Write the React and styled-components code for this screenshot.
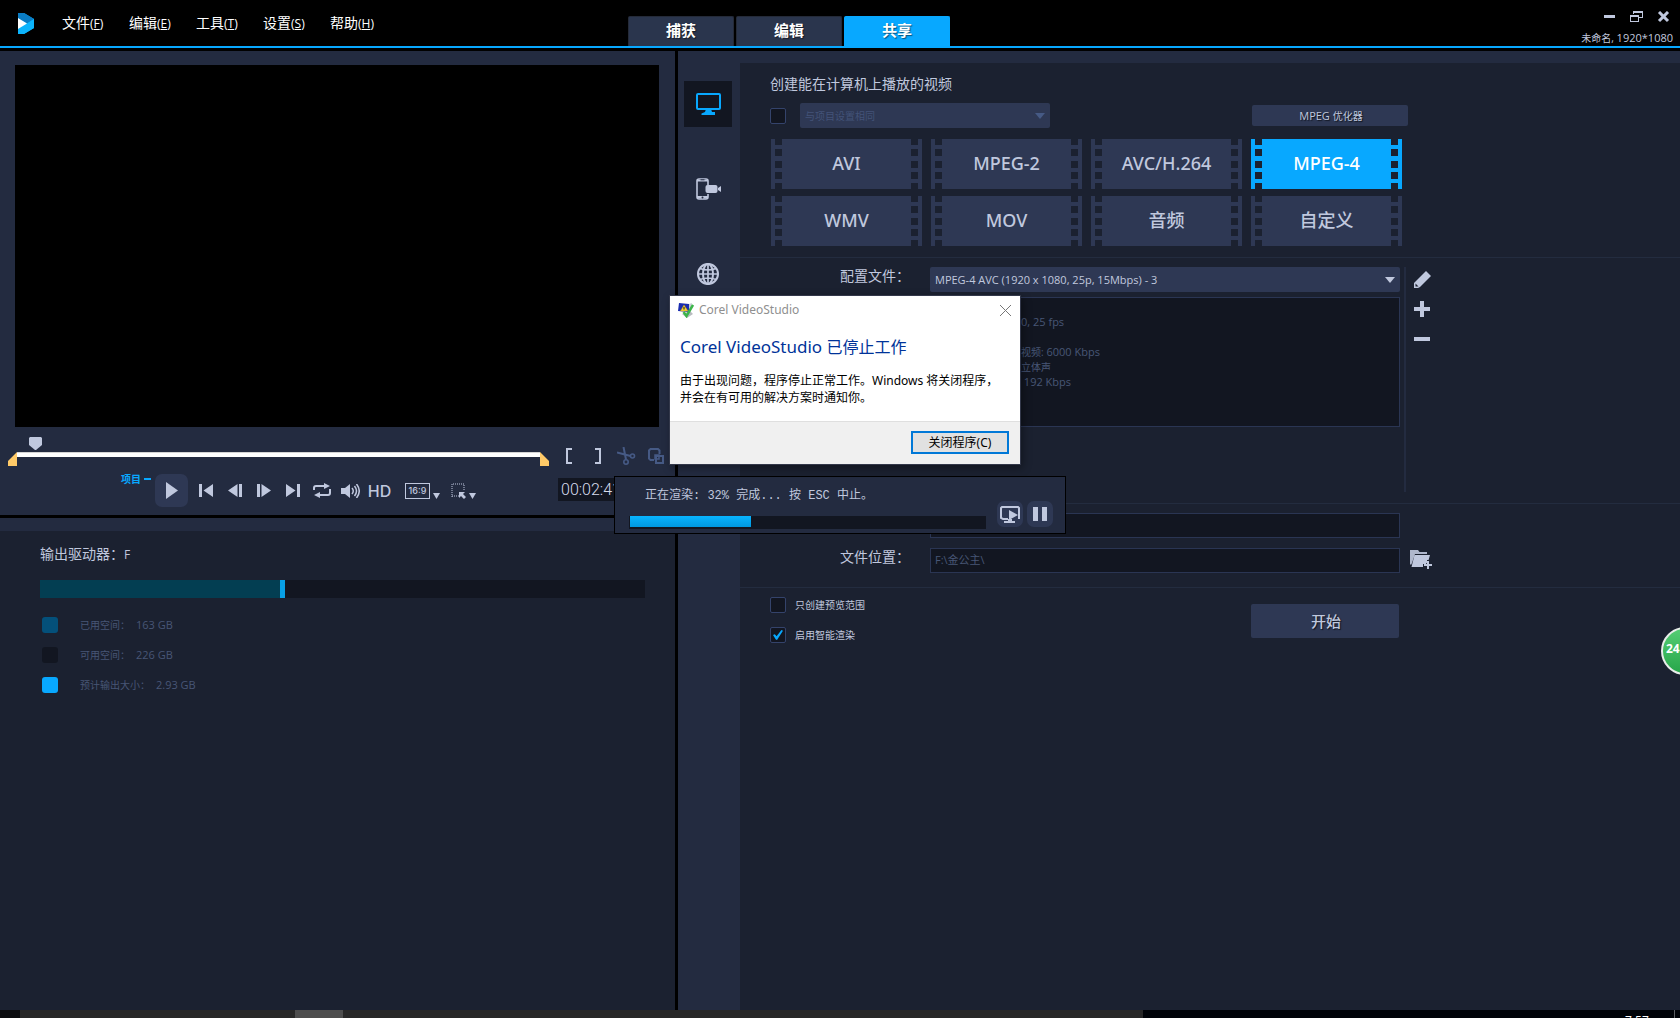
import React, { useState } from "react";
import styled, { createGlobalStyle } from "styled-components";

const ui = '"Open Sans", "Noto Sans", "Noto Sans CJK SC", sans-serif';

const GlobalStyle = createGlobalStyle`
  * {
    box-sizing: border-box;
  }

  body {
    margin: 0;
    background: #000;
    color: #c0c8de;
    font: 11px/16px ${ui};
    overflow: hidden;
  }

  button,
  input,
  select {
    margin: 0;
    color: inherit;
    font: inherit;
  }

  svg {
    display: block;
  }
`;

const Page = styled.div`
  position: relative;
  display: flex;
  flex-direction: column;
  height: 100vh;
  overflow: hidden;
`;

/* ---------- header ---------- */

const Header = styled.header`
  display: flex;
  justify-content: space-between;
  height: 48px;
  border-bottom: 2px solid #08a8ff;
`;

const HeaderLeft = styled.div`
  display: flex;
  flex: 0 1 628px;
  align-items: center;
  padding-left: 18px;
`;

const Menu = styled.nav`
  display: flex;
  margin-left: 28px;
`;

const MenuItem = styled.button`
  width: 67px;
  padding: 0;
  border: 0;
  background: none;
  color: #fff;
  font-size: 14px;
  line-height: 20px;
  text-align: left;
  white-space: nowrap;

  span {
    font-size: 12px;
  }
`;

const Tabs = styled.div`
  display: flex;
  gap: 2px;
  align-items: flex-end;
`;

const Tab = styled.button`
  width: 106px;
  height: 30px;
  padding: 0 0 4px;
  border: 1px solid ${(p) => (p.$active ? "#08a8ff" : "#242a38")};
  border-bottom: 0;
  border-radius: 2px 2px 0 0;
  background: ${(p) => (p.$active ? "#08a8ff" : "#2a354d")};
  color: #fff;
  font-size: 15px;
  font-weight: 700;
  text-shadow: 1px 1px 1px rgba(0, 0, 0, 0.5);
`;

const HeaderRight = styled.div`
  display: flex;
  flex: 1;
  flex-direction: column;
  align-items: flex-end;
  padding: 11px 7px 0 0;
`;

const WindowButtons = styled.div`
  display: flex;
  gap: 14px;
  padding-right: 3px;
`;

const PlainButton = styled.button`
  display: grid;
  place-items: center;
  padding: 0;
  border: 0;
  background: none;
`;

const ProjectName = styled.div`
  margin-top: 7px;
  color: #c0c8de;

  span {
    font-size: 10px;
  }
`;

/* ---------- main split ---------- */

const Main = styled.main`
  display: grid;
  flex: 1;
  grid-template-columns: 675fr 1002fr;
  gap: 3px;
  min-height: 0;
  margin-top: 3px;
`;

const LeftColumn = styled.div`
  display: flex;
  flex-direction: column;
  gap: 3px;
  min-width: 0;
`;

const Player = styled.section`
  height: 464px;
  padding-top: 14px;
  background: #232b40;
`;

const Screen = styled.div`
  margin: 0 16px 0 15px;
  height: 362px;
  background: #000;
`;

const TrimRow = styled.div`
  display: flex;
  gap: 5px;
  padding: 10px 5px 0 8px;
`;

const Scrubber = styled.div`
  display: flex;
  flex: 1;
  flex-direction: column;
  gap: 2px;

  > svg {
    margin-left: 21px;
  }
`;

const Track = styled.div`
  display: flex;
`;

const TrackLine = styled.div`
  flex: 1;
  height: 5px;
  border-top: 1px solid #d4d4d4;
  background: #fff;
`;

const TrimTools = styled.div`
  display: flex;
  padding-top: 9px;
`;

const ToolButton = styled(PlainButton)`
  width: 29px;
  height: 20px;
`;

const Controls = styled.div`
  display: flex;
  align-items: center;
  padding: 8px 11px 0 121px;
`;

const ModeLabel = styled.div`
  display: flex;
  gap: 3px;
  align-items: center;
  align-self: flex-start;
  height: 10px;
  color: #08a8ff;
  font-size: 10px;
  font-weight: 700;

  &::after {
    width: 7px;
    height: 2px;
    background: #08a8ff;
    content: "";
  }
`;

const PlayButton = styled(PlainButton)`
  width: 33px;
  height: 33px;
  margin: 0 3px 0 4px;
  border-radius: 7px;
  background: #2e3854;
`;

const HdButton = styled(ToolButton)`
  font-family: Inter, sans-serif;
  font-size: 16px;
  font-weight: 500;
`;

const DropButton = styled.button`
  display: flex;
  gap: 3px;
  align-items: flex-end;
  margin-left: 11px;
  padding: 0;
  border: 0;
  background: none;
`;

const Ratio = styled.span`
  width: 25px;
  height: 16px;
  border: 1px solid #c0c8de;
  font: 500 9px/13px Inter, sans-serif;
  text-align: center;
`;

const TimeCode = styled.output`
  width: 106px;
  height: 23px;
  margin: -3px 0 0 auto;
  padding-left: 3px;
  background: #121621;
  color: #d7dcec;
  font: 300 16px/23px Roboto, sans-serif;
`;

/* ---------- output drive ---------- */

const Drive = styled.section`
  flex: 1;
  padding: 13px 30px 0 40px;
  border-top: 13px solid #232b40;
  background: #1b2130;
`;

const Title = styled.h2`
  margin: 0;
  color: #c0c8de;
  font-size: 14px;
  font-weight: 400;
  line-height: 20px;

  span {
    font-size: 12px;
  }
`;

const DriveBar = styled.div`
  display: flex;
  height: 18px;
  margin-top: 15px;
  background: #121621;
`;

const Used = styled.div`
  border-right: 5px solid #08a0e6;
  background: #033e52;
`;

const Legend = styled.ul`
  display: grid;
  gap: 14px;
  margin: 19px 0 0;
  padding: 0 0 0 2px;
  list-style: none;
`;

const LegendItem = styled.li`
  display: flex;
  align-items: center;
  color: #485676;
  font-size: 11px;

  &::before {
    width: 16px;
    height: 16px;
    margin-right: 22px;
    border-radius: 3px;
    background: ${(p) => p.$color};
    content: "";
  }

  span {
    margin-right: 6px;
    font-size: 10px;
  }
`;

/* ---------- share panel ---------- */

const RightColumn = styled.div`
  display: flex;
  min-width: 0;
  padding-top: 12px;
  background: #232b40;
`;

const SideBar = styled.nav`
  display: flex;
  flex: 0 0 62px;
  flex-direction: column;
  gap: 39px;
  padding: 18px 8px 0 6px;
`;

const SideButton = styled.button`
  display: grid;
  place-items: center;
  height: 46px;
  padding: 0;
  border: 0;
  background: ${(p) => (p.$active ? "#121621" : "none")};
  color: ${(p) => (p.$active ? "#08a8ff" : "#c0c8de")};
`;

const Share = styled.section`
  flex: 1;
  min-width: 0;
  background: #1b2130;
`;

const Block = styled.div`
  padding: ${(p) => p.$pad};
  border-bottom: ${(p) => (p.$last ? "0" : "1px solid #232c3f")};
`;

const SameRow = styled.div`
  display: flex;
  gap: 14px;
  align-items: center;
  width: 638px;
  margin-top: 9px;
`;

const Check = styled.input.attrs({ type: "checkbox" })`
  display: grid;
  place-items: center;
  width: 16px;
  height: 16px;
  border: 1px solid #34436b;
  border-radius: 2px;
  background: #121621;
  appearance: none;

  &:checked::before {
    width: 10px;
    height: 10px;
    background: #08a8ff;
    clip-path: polygon(0 50%, 18% 42%, 36% 62%, 84% 0, 100% 8%, 40% 100%, 28% 96%);
    content: "";
  }
`;

const SelectBox = styled.div`
  position: relative;
  width: ${(p) => p.$width};

  select {
    width: 100%;
    height: 25px;
    padding: 0 5px;
    border: 0;
    border-radius: 2px;
    background: #2e3854;
    color: ${(p) => (p.$dim ? "#435378" : "#c0c8de")};
    font-size: ${(p) => (p.$dim ? "10px" : "11px")};
    opacity: 1;
    appearance: none;
  }

  svg {
    position: absolute;
    top: 10px;
    right: 5px;
    color: ${(p) => (p.$dim ? "#465a85" : "#c0c8de")};
    pointer-events: none;
  }
`;

const Optimizer = styled.button`
  width: 156px;
  height: 21px;
  margin-left: auto;
  padding: 0 0 0 2px;
  border: 0;
  border-radius: 2px;
  background: #2e3854;
  text-shadow: 1px 1px 1px #10141f;

  span {
    font-size: 10px;
  }
`;

const Formats = styled.div`
  display: grid;
  grid-template-columns: repeat(4, 151px);
  gap: 7px 9px;
  margin: 11px 0 0 1px;
`;

const Film = styled.button`
  display: flex;
  align-items: center;
  justify-content: space-between;
  height: 50px;
  padding: 0 4px;
  border: 0;
  background: ${(p) => (p.$active ? "#08a8ff" : "#2e3854")};
  color: ${(p) => (p.$active ? "#fff" : "#c0c8de")};
  font-family: "Noto Sans", "Noto Sans CJK SC", sans-serif;
  font-size: 18px;
  font-weight: 500;

  span {
    padding-bottom: 2px;
  }

  &::before,
  &::after {
    width: 7px;
    height: 50px;
    background: linear-gradient(
      #1b2130 6px,
      transparent 6px 10px,
      #1b2130 10px 17px,
      transparent 17px 22px,
      #1b2130 22px 29px,
      transparent 29px 33px,
      #1b2130 33px 40px,
      transparent 40px 44px,
      #1b2130 44px
    );
    content: "";
  }
`;

const ProfileRow = styled.div`
  display: grid;
  grid-template-columns: 90px 470px 1fr;
  align-items: start;
`;

const FieldLabel = styled.label`
  color: #c0c8de;
  font-size: 14px;
  line-height: 18px;
  white-space: nowrap;
`;

const Info = styled.dl`
  display: grid;
  grid-template-columns: 84px 1fr;
  gap: 0 1px;
  height: 130px;
  margin: 5px 0 0;
  padding: 16px 5px 0;
  border: 1px solid #2a3553;
  background: #121621;
  align-content: start;
  color: #485676;
  line-height: 15px;

  dt {
    overflow: hidden;
    text-align: right;
    white-space: nowrap;
  }

  dd {
    height: 15px;
    margin: 0;
  }

  small {
    font-size: 10px;
  }
`;

const ProfileTools = styled.div`
  display: flex;
  flex-direction: column;
  gap: 12px;
  height: 225px;
  margin-left: 4px;
  padding: 4px 0 0 8px;
  border-left: 2px solid #232b40;
  align-items: flex-start;
`;

const TextInput = styled.input`
  width: 100%;
  height: 25px;
  padding: 0 4px 4px;
  border: 1px solid #2a3553;
  background: #121621;
  color: #485676;
  font-size: 11px;
`;

const FileRow = styled(ProfileRow)`
  & + & {
    margin-top: 10px;
  }

  > button {
    margin: 2px 0 0 10px;
    justify-self: start;
  }
`;

const StartRow = styled.div`
  display: flex;
  justify-content: space-between;
  width: 629px;
`;

const CheckList = styled.div`
  display: grid;
  gap: 14px;
`;

const CheckLabel = styled.label`
  display: flex;
  gap: 9px;
  align-items: center;
  height: 16px;
  font-size: 10px;
`;

const StartButton = styled.button`
  width: 148px;
  height: 34px;
  margin-top: 7px;
  padding: 0 0 0 2px;
  border: 0;
  border-radius: 2px;
  background: #2e3854;
  font-size: 15px;
  font-weight: 500;
  text-shadow: 1px 1px 1px #10141f;
`;

/* ---------- windows over the page ---------- */

const CrashDialog = styled.div`
  position: absolute;
  z-index: 2;
  top: 295px;
  left: 669px;
  width: 352px;
  border: 1px solid #33384a;
  background: #fff;
  box-shadow: 2px 3px 8px rgba(0, 0, 0, 0.35);
  color: #000;
  font-family: "Noto Sans", "Noto Sans CJK SC", sans-serif;
  font-size: 12px;
`;

const CrashBar = styled.div`
  display: flex;
  gap: 5px;
  align-items: center;
  height: 28px;
  padding: 0 9px 0 8px;
  color: #8f8f8f;
  font-size: 12px;

  button {
    margin-left: auto;
  }
`;

const CrashBody = styled.div`
  padding: 11px 10px 15px;

  h1 {
    margin: 0;
    color: #003399;
    font-size: 17px;
    font-weight: 400;
    line-height: 24px;
  }

  h1 span {
    font-size: 16px;
  }

  p {
    margin: 13px 0 0;
    line-height: 17px;
  }
`;

const CrashFoot = styled.div`
  display: flex;
  justify-content: flex-end;
  padding: 9px 11px 10px;
  border-top: 1px solid #dfdfdf;
  background: #f0f0f0;

  button {
    width: 98px;
    height: 23px;
    padding: 0;
    border: 2px solid #0078d7;
    background: #e1e1e1;
    line-height: 18px;
  }
`;

const RenderDialog = styled.div`
  position: absolute;
  z-index: 1;
  top: 476px;
  left: 614px;
  display: flex;
  gap: 4px;
  align-items: flex-end;
  width: 452px;
  height: 58px;
  padding: 0 12px 6px 14px;
  border: 1px solid #000;
  background: #232b40;
`;

const RenderStatus = styled.div`
  flex: 1;
  align-self: stretch;
  margin-right: 7px;

  p {
    margin: 0 0 0 16px;
    padding: 10px 0;
    font: 12px/19px "Liberation Mono", "Noto Sans CJK SC", monospace;
  }
`;

const RenderTrack = styled.div`
  height: 13px;
  padding: 0 1px 1px;
  background: #121621;
`;

const RenderFill = styled.div`
  height: 11px;
  background: linear-gradient(#08b4ff, #0098e0);
`;

const RoundButton = styled(PlainButton)`
  width: 26px;
  height: 26px;
  border-radius: 7px;
  background: #2e3854;
`;

const Bubble = styled.div`
  position: absolute;
  top: 627px;
  right: -29px;
  width: 48px;
  height: 48px;
  padding-left: 3px;
  border: 2px solid #e8ece9;
  border-radius: 50%;
  background: linear-gradient(#55cd74, #27a64a);
  color: #fff;
  font: 700 12px/40px "Open Sans", sans-serif;
`;

const TaskBar = styled.footer`
  display: grid;
  grid-template-columns: 20fr 275fr 48fr 800fr 482fr 50fr 5px;
  height: 8px;
  overflow: hidden;
  background: #000308;
`;

const TaskPart = styled.div`
  height: 8px;
  background: ${(p) => p.$color};
`;

const Clock = styled.time`
  padding-top: 3px;
  border-right: 1px solid #5c5f63;
  color: #fff;
  font-size: 12px;
`;

/* ---------- icons ---------- */

const Logo = () => (
  <svg width="16" height="21" viewBox="0 0 16 21">
    <path d="M0 0h6l10 6v9l-10 6H0z" fill="#00a8f0" />
    <path d="M0 0h6l10 6-7 4.500-9-5z" fill="#0a7cc4" />
    <path d="M16 6v9L6 21H0v-5.500l9-5z" fill="#0cb4fc" />
    <path d="M0 5l9 5.500L0 16z" fill="#fff" />
  </svg>
);

const Arrow = ({ size = 10 }) => (
  <svg width={size} height="6" viewBox="0 0 10 6" preserveAspectRatio="none">
    <path d="M0 0h10L5 6z" fill="currentColor" />
  </svg>
);

const Icon = ({ w, h, children }) => (
  <svg width={w} height={h} viewBox={`0 0 ${w} ${h}`} fill="currentColor">
    {children}
  </svg>
);

const stroke = { fill: "none", stroke: "currentColor" };

const MonitorIcon = () => (
  <Icon w={25} h={22}>
    <rect x="1" y="1" width="23" height="15" rx="1" {...stroke} strokeWidth="2" />
    <path d="M10 16h5l1 3h3v3H5.500v-1.500L9 19z" />
  </Icon>
);

const PhoneIcon = () => (
  <Icon w={25} h={22}>
    <path
      d="M12 7V3a2 2 0 0 0-2-2H3a2 2 0 0 0-2 2v16a2 2 0 0 0 2 2h7a2 2 0 0 0 2-2v-3"
      {...stroke}
      strokeWidth="1.600"
    />
    <path d="M1 2h11v1.500H1zM1 18h11v2.500H1z" />
    <path d="M4.500 1.800h4" stroke="#232b40" />
    <circle cx="6.500" cy="19.500" r="1" fill="#232b40" />
    <rect x="9.500" y="7" width="12" height="8" rx="2" />
    <path d="M22 10l3-2v6l-3-2z" />
  </Icon>
);

const GlobeIcon = () => (
  <Icon w={22} h={22}>
    <g {...stroke} strokeWidth="2">
      <circle cx="11" cy="11" r="10" />
      <ellipse cx="11" cy="11" rx="5" ry="10" />
      <path d="M11 1v20M1 11h20M3 5.500q8 3 16 0M3 16.500q8-3 16 0" strokeWidth="1.700" />
    </g>
  </Icon>
);

const PencilIcon = () => (
  <Icon w={17} h={17}>
    <path d="M12 0l5 5L6 16l-2 1H0v-5z" />
    <path d="M1.500 12.500v3h3z" fill="#1b2130" />
  </Icon>
);

const FolderIcon = () => (
  <Icon w={23} h={20}>
    <path d="M0 0h8l1.500 2H17v2H5L2 13l-1 2L0 14z" opacity="0.900" />
    <path d="M4.500 5H20l-2 7-2 1.500V17H1.500z" />
    <path d="M17 10h3v4h4v3h-4v3h-3v-3h-4v-3h4z" fill="#1b2130" />
    <path d="M17 11h2v3h3v2h-3v3h-2v-3h-3v-2h3z" />
  </Icon>
);

const ScissorsIcon = () => (
  <Icon w={19} h={18}>
    <g {...stroke} stroke="#465a85" strokeWidth="2">
      <circle cx="15.500" cy="9" r="2" strokeWidth="1.600" />
      <circle cx="9" cy="15" r="2.200" strokeWidth="1.600" />
      <path d="M0 5.500l13.500 3.500M6.500 0l2.500 12.500" />
    </g>
  </Icon>
);

const OverlapIcon = () => (
  <Icon w={16} h={16}>
    <g {...stroke} stroke="#465a85" strokeWidth="2">
      <path d="M6 12H2.500L1 10.500v-8L2.500 1H10l1.500 1.500V6" />
      <rect x="8" y="8" width="7" height="7" />
      <path d="M11 7H7v4h4z" strokeWidth="1.500" />
    </g>
  </Icon>
);

const CrashIcon = () => (
  <svg width="16" height="16" viewBox="0 0 16 16">
    <path d="M4 12l8-3 3 3-6 4z" fill="#b9bcc0" />
    <path d="M1 1l10 1v8L0 9z" fill="#1a2db0" />
    <path d="M11 2l3-1-1 8-2 1z" fill="#c9ced6" />
    <path d="M6 3l4 6H2.500z" fill="#f7d43a" stroke="#c79b10" strokeWidth="0.500" />
    <path d="M6 5v2.500" stroke="#111" />
    <path d="M5.500 10L8.500 14 15 3" fill="none" stroke="#3cb54a" strokeWidth="2.500" />
  </svg>
);

/* ---------- data ---------- */

const menus = [
  ["文件", "F"],
  ["编辑", "E"],
  ["工具", "T"],
  ["设置", "S"],
  ["帮助", "H"],
];

const formats = ["AVI", "MPEG-2", "AVC/H.264", "MPEG-4", "WMV", "MOV", "音频", "自定义"];

const transport = [
  ["起始", "M0 0h3v13H0zM14 0v13L4.500 6.500z"],
  ["上一帧", "M11 0h3v13h-3zM9.500 0v13L0 6.500z"],
  ["下一帧", "M0 0h3v13H0zM4.500 0v13L14 6.500z"],
  ["结束", "M11 0h3v13h-3zM0 0v13l9.500-6.500z"],
];

const drive = [
  ["已用空间：", "163 GB", "#04507a"],
  ["可用空间：", "226 GB", "#121621"],
  ["预计输出大小：", "2.93 GB", "#08a8ff"],
];

function TopBar() {
  return (
    <Header>
      <HeaderLeft>
        <Logo />
        <Menu>
          {menus.map(([name, key]) => (
            <MenuItem key={key}>
              {name}
              <span>
                (<u>{key}</u>)
              </span>
            </MenuItem>
          ))}
        </Menu>
      </HeaderLeft>
      <Tabs>
        <Tab>捕获</Tab>
        <Tab>编辑</Tab>
        <Tab $active>共享</Tab>
      </Tabs>
      <HeaderRight>
        <WindowButtons>
          <PlainButton aria-label="最小化">
            <Icon w={13} h={12}>
              <path d="M1 4h11v3H1z" />
            </Icon>
          </PlainButton>
          <PlainButton aria-label="还原">
            <Icon w={13} h={12}>
              <path d="M3 0h10v7H9V6h3V2H4v1H3z" />
              <path d="M0 4h9v7H0zm1 2v4h7V6z" fillRule="evenodd" />
            </Icon>
          </PlainButton>
          <PlainButton aria-label="关闭">
            <Icon w={13} h={12}>
              <path d="M2 1l9 9M11 1l-9 9" {...stroke} strokeWidth="3" />
            </Icon>
          </PlainButton>
        </WindowButtons>
        <ProjectName>
          <span>未命名,</span> 1920*1080
        </ProjectName>
      </HeaderRight>
    </Header>
  );
}

function PlayerPanel() {
  return (
    <Player>
      <Screen />
      <TrimRow>
        <Scrubber>
          <Icon w={13} h={13}>
            <path d="M1 0h11l1 1v7l-6 5h-1L0 8V1z" />
          </Icon>
          <Track>
            <svg width="9" height="14">
              <path d="M9 0v14H0V9z" fill="#ffca68" />
            </svg>
            <TrackLine />
            <svg width="9" height="14">
              <path d="M0 0l9 9v5H0z" fill="#ffca68" />
            </svg>
          </Track>
        </Scrubber>
        <TrimTools>
          <ToolButton aria-label="开始标记">
            <Icon w={6} h={16}>
              <path d="M0 0h6v2H2v12h4v2H0z" />
            </Icon>
          </ToolButton>
          <ToolButton aria-label="结束标记">
            <Icon w={6} h={16}>
              <path d="M0 0h6v16H0v-2h4V2H0z" />
            </Icon>
          </ToolButton>
          <ToolButton aria-label="剪切">
            <ScissorsIcon />
          </ToolButton>
          <ToolButton aria-label="复制">
            <OverlapIcon />
          </ToolButton>
        </TrimTools>
      </TrimRow>
      <Controls>
        <ModeLabel>项目</ModeLabel>
        <PlayButton aria-label="播放">
          <Icon w={12} h={17}>
            <path d="M0 0l12 8.500L0 17z" />
          </Icon>
        </PlayButton>
        {transport.map(([name, path]) => (
          <ToolButton key={name} aria-label={name}>
            <Icon w={14} h={13}>
              <path d={path} />
            </Icon>
          </ToolButton>
        ))}
        <ToolButton aria-label="重复">
          <Icon w={18} h={15}>
            <path d="M1 7V5q0-2 2-2h9M17 6v4q0 2-2 2H6" {...stroke} strokeWidth="2" />
            <path d="M11 0l6 3-6 3zM7 9v6l-6-3z" />
          </Icon>
        </ToolButton>
        <ToolButton aria-label="音量">
          <Icon w={19} h={14}>
            <path d="M0 4h4l5-4v14l-5-4H0z" />
            <path d="M11 4q2.500 3 0 6M13.500 2q4 5 0 10M15.500 0q5.500 7 0 14" {...stroke} strokeWidth="1.500" />
          </Icon>
        </ToolButton>
        <HdButton>HD</HdButton>
        <DropButton aria-label="更改项目宽高比">
          <Ratio>16:9</Ratio>
          <Arrow size={7} />
        </DropButton>
        <DropButton aria-label="选择区域">
          <Icon w={15} h={16}>
            <path d="M1 14V1h12v6M1 13h7" {...stroke} strokeDasharray="1 1" />
            <path d="M8 9h6l-2 2 3 3-2 2-3-3-2 2z" />
          </Icon>
          <Arrow size={7} />
        </DropButton>
        <TimeCode>00:02:41:05</TimeCode>
      </Controls>
    </Player>
  );
}

function DrivePanel() {
  return (
    <Drive>
      <Title>
        输出驱动器：<span>F</span>
      </Title>
      <DriveBar>
        <Used style={{ width: `${(245 / 605) * 100}%` }} />
      </DriveBar>
      <Legend>
        {drive.map(([name, value, color]) => (
          <LegendItem key={name} $color={color}>
            <span>{name}</span>
            {value}
          </LegendItem>
        ))}
      </Legend>
    </Drive>
  );
}

function SharePanel() {
  const [format, setFormat] = useState("MPEG-4");

  return (
    <RightColumn>
      <SideBar>
        <SideButton $active aria-label="计算机">
          <MonitorIcon />
        </SideButton>
        <SideButton aria-label="设备">
          <PhoneIcon />
        </SideButton>
        <SideButton aria-label="网络">
          <GlobeIcon />
        </SideButton>
      </SideBar>
      <Share>
        <Block $pad="11px 0 11px 30px">
          <Title>创建能在计算机上播放的视频</Title>
          <SameRow>
            <Check aria-label="与项目设置相同" />
            <SelectBox $dim $width="250px">
              <select aria-label="项目设置" disabled>
                <option>与项目设置相同</option>
              </select>
              <Arrow />
            </SelectBox>
            <Optimizer>
              MPEG <span>优化器</span>
            </Optimizer>
          </SameRow>
          <Formats>
            {formats.map((name) => (
              <Film key={name} $active={name === format} onClick={() => setFormat(name)}>
                <span>{name}</span>
              </Film>
            ))}
          </Formats>
        </Block>
        <Block $pad="9px 0 11px 100px">
          <ProfileRow>
            <FieldLabel htmlFor="profile">配置文件：</FieldLabel>
            <div>
              <SelectBox $width="100%">
                <select id="profile">
                  <option>MPEG-4 AVC (1920 x 1080, 25p, 15Mbps) - 3</option>
                </select>
                <Arrow />
              </SelectBox>
              <Info>
                <dt>1920 x 108</dt>
                <dd>0, 25 fps</dd>
                <dt />
                <dd />
                <dt>MPEG-4</dt>
                <dd>
                  <small>视频:</small> 6000 Kbps
                </dd>
                <dt>48 kHz</dt>
                <dd>
                  <small>立体声</small>
                </dd>
                <dt>AAC</dt>
                <dd>&nbsp;192 Kbps</dd>
              </Info>
            </div>
            <ProfileTools>
              <PlainButton aria-label="编辑配置文件">
                <PencilIcon />
              </PlainButton>
              <PlainButton aria-label="新建配置文件">
                <Icon w={16} h={18}>
                  <path d="M6 1h4v6h6v4h-6v6H6v-6H0V7h6z" />
                </Icon>
              </PlainButton>
              <PlainButton aria-label="删除配置文件">
                <Icon w={16} h={18}>
                  <path d="M0 7h16v4H0z" />
                </Icon>
              </PlainButton>
            </ProfileTools>
          </ProfileRow>
        </Block>
        <Block $pad="9px 0 14px 100px">
          <FileRow>
            <FieldLabel htmlFor="name">文件名：</FieldLabel>
            <TextInput id="name" defaultValue="" />
          </FileRow>
          <FileRow>
            <FieldLabel htmlFor="folder">文件位置：</FieldLabel>
            <TextInput id="folder" defaultValue="F:\金公主\" />
            <PlainButton aria-label="浏览">
              <FolderIcon />
            </PlainButton>
          </FileRow>
        </Block>
        <Block $last $pad="9px 0 0 30px">
          <StartRow>
            <CheckList>
              <CheckLabel>
                <Check />
                只创建预览范围
              </CheckLabel>
              <CheckLabel>
                <Check defaultChecked />
                启用智能渲染
              </CheckLabel>
            </CheckList>
            <StartButton>开始</StartButton>
          </StartRow>
        </Block>
      </Share>
    </RightColumn>
  );
}

function RenderProgress({ percent }) {
  return (
    <RenderDialog role="status">
      <RenderStatus>
        <p>正在渲染: {percent}% 完成... 按 ESC 中止。</p>
        <RenderTrack>
          <RenderFill style={{ width: `${percent + 2}%` }} />
        </RenderTrack>
      </RenderStatus>
      <RoundButton aria-label="预览">
        <Icon w={20} h={17}>
          <path d="M8 13H3l-2-1V2l1-1h16l1 1v10h-1" {...stroke} strokeWidth="2" />
          <path d="M9 4l9 5-9 5zM8 13h4v2h3v2H4v-2h4z" />
        </Icon>
      </RoundButton>
      <RoundButton aria-label="暂停">
        <Icon w={14} h={14}>
          <path d="M0 0h5v14H0zM9 0h5v14H9z" />
        </Icon>
      </RoundButton>
    </RenderDialog>
  );
}

function Crash() {
  return (
    <CrashDialog role="dialog" aria-labelledby="crash-title">
      <CrashBar>
        <CrashIcon />
        Corel VideoStudio
        <PlainButton aria-label="关闭">
          <Icon w={11} h={11}>
            <path d="M0 0l11 11M11 0L0 11" stroke="#777" />
          </Icon>
        </PlainButton>
      </CrashBar>
      <CrashBody>
        <h1 id="crash-title">
          Corel VideoStudio <span>已停止工作</span>
        </h1>
        <p>
          由于出现问题，程序停止正常工作。Windows 将关闭程序，
          <br />
          并会在有可用的解决方案时通知你。
        </p>
      </CrashBody>
      <CrashFoot>
        <button>关闭程序(C)</button>
      </CrashFoot>
    </CrashDialog>
  );
}

function App() {
  return (
    <Page>
      <GlobalStyle />
      <TopBar />
      <Main>
        <LeftColumn>
          <PlayerPanel />
          <DrivePanel />
        </LeftColumn>
        <SharePanel />
      </Main>
      <TaskBar>
        <TaskPart $color="#0b0c0f" />
        <TaskPart $color="#272727" />
        <TaskPart $color="#4d4d4d" />
        <TaskPart $color="#272727" />
        <TaskPart $color="#000308" />
        <Clock>7:57</Clock>
      </TaskBar>
      <RenderProgress percent={32} />
      <Crash />
      <Bubble>24</Bubble>
    </Page>
  );
}

export default App;
